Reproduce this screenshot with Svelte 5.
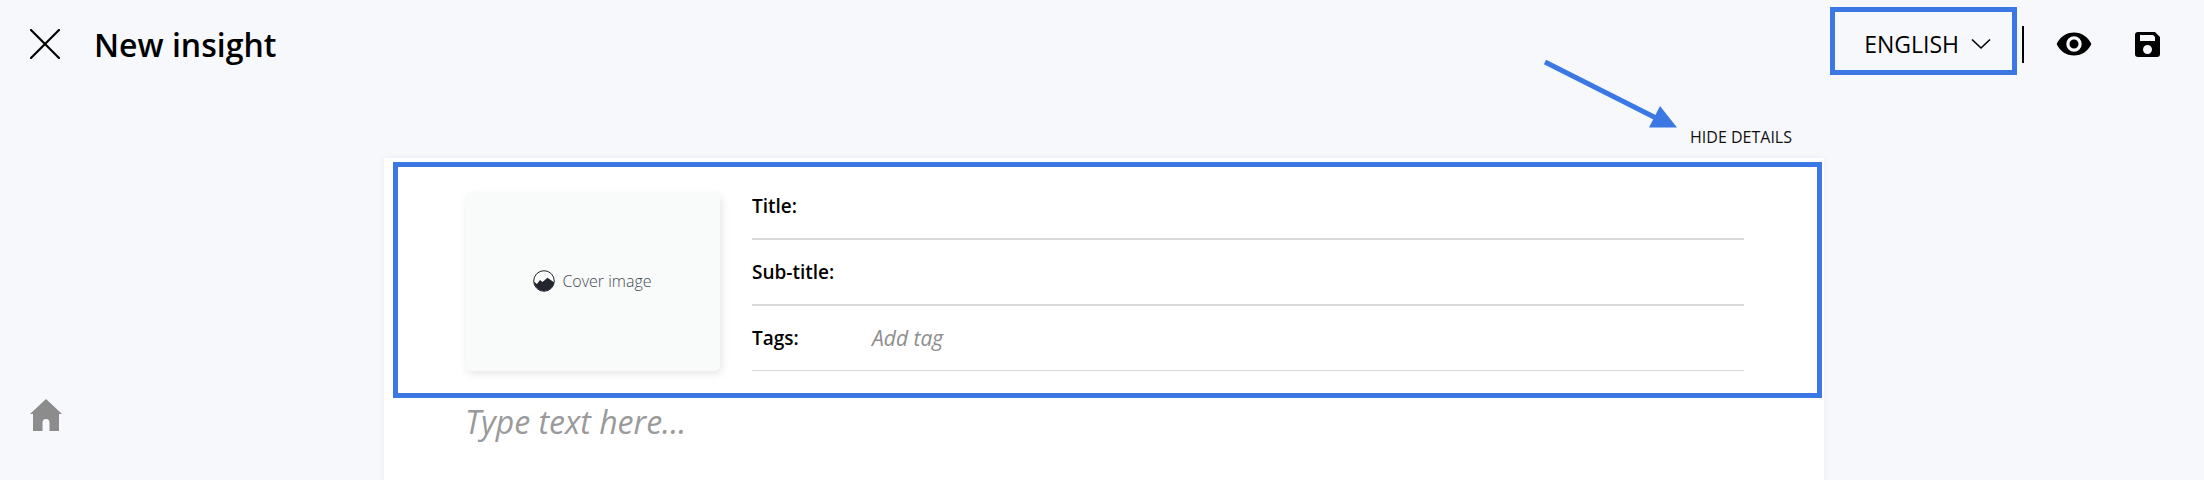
<script>
    let title = 'New insight';
    let language = 'ENGLISH';
    let fields = [
        { label: 'Title:', placeholder: '' },
        { label: 'Sub-title:', placeholder: '' },
        { label: 'Tags:', placeholder: 'Add tag' },
    ];
</script>

<div class="page">
    <header class="topbar">
        <svg class="close" viewBox="0 0 30 30" width="30" height="30" aria-hidden="true">
            <path d="M1 1 L29 29 M29 1 L1 29" fill="none" stroke="#000" stroke-width="2.2" stroke-linecap="round" />
        </svg>
        <h1>{title}</h1>
        <div class="spacer"></div>
        <button class="lang">
            {language}
            <svg viewBox="0 0 20 12" width="20" height="12" aria-hidden="true">
                <path d="M1 1.5 L10 10 L19 1.5" fill="none" stroke="#000" stroke-width="1.6" />
            </svg>
        </button>
        <span class="divider"></span>
        <svg class="eye" viewBox="0 0 28 20" width="36" height="26" aria-hidden="true">
            <path fill-rule="evenodd" fill="#000" d="M14 1C8 1 3 4.5 0.5 10 3 15.5 8 19 14 19s11-3.500 13.500-9C25 4.500 20 1 14 1zM14 16a6 6 0 1 1 0-12 6 6 0 0 1 0 12zM14 6.500a3.500 3.500 0 1 0 0 7 3.500 3.500 0 0 0 0-7z" />
        </svg>
        <svg class="save" viewBox="0 0 25 25" width="25" height="25" aria-hidden="true">
            <path fill-rule="evenodd" fill="#000" d="M3 0H20L25 5V22a3 3 0 0 1-3 3H3a3 3 0 0 1-3-3V3a3 3 0 0 1 3-3zM5 3V9H20V5L18 3zM12.500 13a4.500 4.500 0 1 0 0 9 4.500 4.500 0 0 0 0-9z" />
        </svg>
    </header>

    <div class="hide-row"><span>HIDE DETAILS</span></div>

    <main class="sheet">
        <section class="details">
            <div class="cover">
                <svg viewBox="0 0 22 22" width="22" height="22" aria-hidden="true">
                    <circle cx="11" cy="11" r="10.300" fill="none" stroke="#23262f" stroke-width="1" />
                    <path fill="#23262f" d="M0.800 11.500 L4 14 L7 10 L9.500 12 L14.500 7.800 L21.200 12.500 A10.300 10.300 0 0 1 0.800 11.500z" />
                </svg>
                <span>Cover image</span>
            </div>
            <div class="fields">
                {#each fields as field}
                    <div class="field">
                        <span class="label">{field.label}</span>
                        {#if field.placeholder}
                            <span class="placeholder">{field.placeholder}</span>
                        {/if}
                    </div>
                {/each}
            </div>
        </section>
        <p class="body-text">Type text here...</p>
    </main>

    <svg class="home" viewBox="0 0 32 32" width="32" height="32" aria-hidden="true">
        <path fill="#8c8c8c" d="M16 0 L32 15 H29 V32 H19.500 V24 Q19.500 20 16 20 Q12.500 20 12.500 24 V32 H3 V15 H0z" />
    </svg>

    <!-- annotations drawn on top of the screenshot -->
    <div class="mark mark-lang"></div>
    <div class="mark mark-details"></div>
    <svg class="arrow" viewBox="0 0 150 75" width="150" height="75" aria-hidden="true">
        <path d="M3 4 L118 62" stroke="#3b78e3" stroke-width="5" fill="none" />
        <path d="M118 48 L107 69.500 H135z" fill="#3b78e3" />
    </svg>
</div>

<style>
    :global(body) {
        background: #f7f8fc;
        font-family: "Open Sans", sans-serif;
        color: #000;
    }

    .page {
        position: relative;
        height: 480px;
        overflow: hidden;
    }

    .topbar {
        display: flex;
        align-items: center;
        height: 88px;
        padding: 0 44px 0 30px;
    }

    h1 {
        margin: 0 0 0 34px;
        font-size: 32px;
        font-weight: 600;
    }

    .spacer {
        flex: 1;
    }

    .lang {
        display: flex;
        align-items: center;
        gap: 12px;
        border: none;
        background: none;
        padding: 0;
        font-family: inherit;
        font-size: 23px;
        font-weight: 500;
        color: #000;
    }

    .divider {
        width: 2px;
        height: 37px;
        background: #000;
        margin: 0 32px 0 31px;
    }

    .save {
        margin-left: 43px;
    }

    .hide-row {
        display: flex;
        justify-content: flex-end;
        height: 70px;
        padding: 37px 412px 0 0;
        box-sizing: border-box;
        font-size: 16px;
        line-height: 24px;
        color: #111;
    }

    .sheet {
        width: 1440px;
        height: 322px;
        margin-left: 384px;
        background: #fff;
        box-shadow: 0 0 6px rgba(30, 40, 90, 0.06);
    }

    .details {
        display: flex;
        gap: 32px;
        padding: 35px 80px 0 81px;
        height: 216px;
        box-sizing: border-box;
    }

    .cover {
        display: flex;
        align-items: center;
        justify-content: center;
        gap: 7px;
        width: 255px;
        height: 178px;
        padding-bottom: 2px;
        box-sizing: border-box;
        background: #f9fafa;
        border-radius: 6px;
        box-shadow: 2px 3px 8px rgba(0, 0, 0, 0.1);
        font-size: 16px;
        font-weight: 300;
        color: #444a55;
    }

    .fields {
        flex: 1;
        margin-top: -19px;
    }

    .field {
        display: flex;
        align-items: center;
        height: 66px;
        box-sizing: border-box;
        border-bottom: 2px solid #d9d9d9;
    }

    .field:last-child {
        height: 65px;
        border-bottom-width: 1px;
    }

    .label {
        width: 120px;
        font-size: 19px;
        font-weight: 600;
    }

    .placeholder {
        font-size: 21px;
        font-style: italic;
        color: #8e8e8e;
    }

    .body-text {
        margin: 0;
        padding: 28px 0 0 81px;
        font-size: 32px;
        line-height: 40px;
        font-style: italic;
        color: #9a9a9a;
    }

    .home {
        position: absolute;
        left: 30px;
        top: 399px;
    }

    .mark {
        position: absolute;
        box-sizing: border-box;
        border: 5px solid #3b78e3;
    }

    .mark-lang {
        left: 1830px;
        top: 7px;
        width: 187px;
        height: 68px;
    }

    .mark-details {
        left: 393px;
        top: 162px;
        width: 1429px;
        height: 236px;
    }

    .arrow {
        position: absolute;
        left: 1542px;
        top: 58px;
    }
</style>
